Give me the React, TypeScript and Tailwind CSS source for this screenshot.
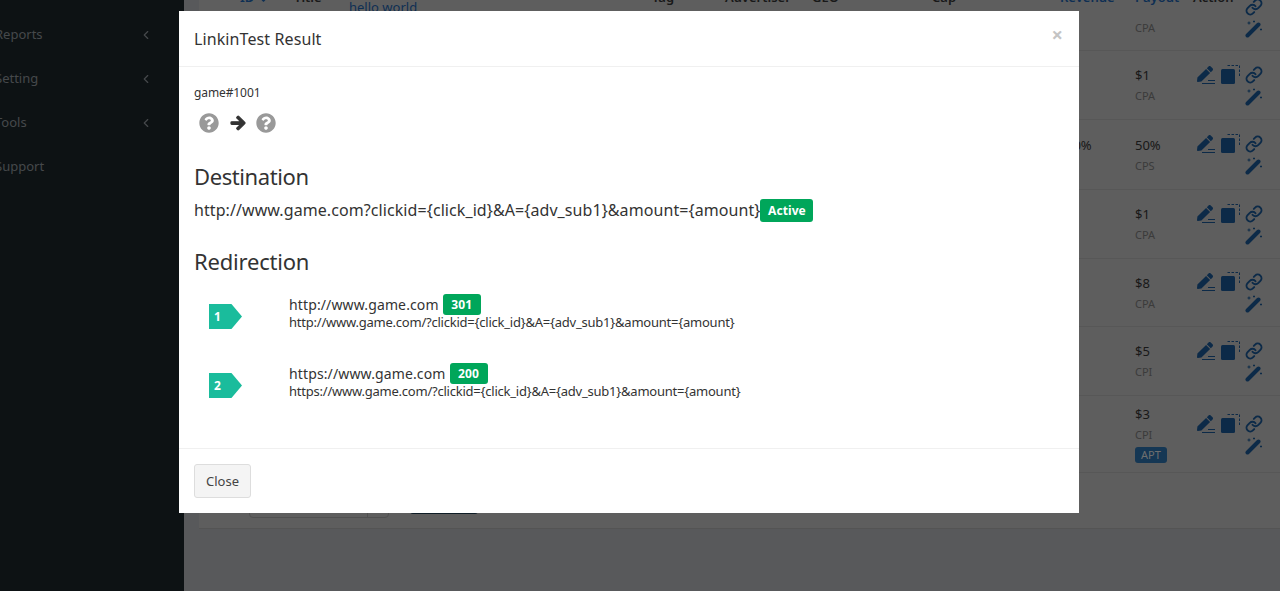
import type { ReactNode } from "react";
import { FaArrowRight, FaPen, FaQuestionCircle, FaSort } from "react-icons/fa";
import { FiChevronLeft } from "react-icons/fi";
import { Link } from "lucide-react";

const sideItems = [
  { label: "Reports", arrow: true },
  { label: "Setting", arrow: true },
  { label: "Tools", arrow: true },
  { label: "Support", arrow: false },
];

const rows = [
  { h: "h-[69px]", revenue: "$1", payout: "$1", kind: "CPA" },
  { h: "h-[70px]", revenue: "50%", payout: "50%", kind: "CPS" },
  { h: "h-[69px]", revenue: "$1", payout: "$1", kind: "CPA" },
  { h: "h-[68px]", revenue: "$1", payout: "$8", kind: "CPA" },
  { h: "h-[69px]", revenue: "$1", payout: "$5", kind: "CPI" },
  { h: "h-[77px]", revenue: "$1", payout: "$3", kind: "CPI", tag: "APT" },
];

const hops = [
  {
    url: "http://www.game.com",
    code: "301",
    full: "http://www.game.com/?clickid={click_id}&A={adv_sub1}&amount={amount}",
  },
  {
    url: "https://www.game.com",
    code: "200",
    full: "https://www.game.com/?clickid={click_id}&A={adv_sub1}&amount={amount}",
  },
];

function CopyIcon() {
  return (
    <svg width="20" height="19" viewBox="0 0 20 19" fill="none" className="-mt-[1px]">
      <path d="M6.5 .5H18.5V12.5" stroke="#185490" strokeWidth="1" strokeDasharray="2.5 1.5" />
      <rect x="0" y="4" width="14" height="15" rx="1.5" fill="#185490" />
    </svg>
  );
}

function EditIcon() {
  return (
    <span className="relative block h-[18px] w-[20px]">
      <FaPen className="absolute left-0 top-0 text-[16px] text-[#185490]" />
      <span className="absolute bottom-[3px] right-[2px] h-px w-[7px] bg-[#185490]" />
      <span className="absolute bottom-0 right-[2px] h-px w-[13px] bg-[#185490]" />
    </span>
  );
}

function WandIcon() {
  return (
    <svg width="18" height="18" viewBox="0 0 18 18" fill="none" className="mt-[3px]">
      <path d="M2.5 15.5 13.5 4.5" stroke="#185490" strokeWidth="4" strokeLinecap="round" />
      <path d="M4 1.5v3M2.5 3h3M9 .5v2M8 1.5h2M16 8.5v2M15 9.5h2" stroke="#185490" strokeWidth="1" />
    </svg>
  );
}

function Actions({ short = false }: { short?: boolean }) {
  return (
    <div className={`flex flex-wrap content-start justify-end gap-x-[4px] gap-y-[1px] ${short ? "ml-[48px] w-[20px]" : "w-[68px]"}`}>
      {!short && <EditIcon />}
      {!short && <CopyIcon />}
      <Link size={18} strokeWidth={2.6} className="text-[#185490]" />
      <WandIcon />
    </div>
  );
}

function Background() {
  return (
    <div className="flex h-[591px] w-[1280px] overflow-hidden bg-[#b1b2b6]">
      <aside className="h-full w-[184px] shrink-0 bg-[#1a2428] pt-[13px] text-[13px] text-[#8a9196]">
        {sideItems.map((item) => (
          <div key={item.label} className="-ml-[5px] flex h-[44px] w-[158px] items-center justify-between">
            <span>{item.label}</span>
            {item.arrow && <FiChevronLeft className="text-[14px]" />}
          </div>
        ))}
      </aside>
      <main className="-mt-[12px] ml-[15px] h-[541px] w-[1100px] shrink-0 border-b border-[#a8a8a8] bg-[#bcbcbc] text-[13px] text-[#333]">
        <div className="flex h-[20px] items-start font-semibold">
          <span className="ml-[41px] flex w-[54px] items-center gap-[4px] text-[#1c5fa8]">
            ID <FaSort className="text-[11px]" />
          </span>
          <span className="w-[358px]">Title</span>
          <span className="w-[73px]">Tag</span>
          <span className="w-[87px]">Advertiser</span>
          <span className="w-[120px]">GEO</span>
          <span className="w-[128px]">Cap</span>
          <span className="w-[75px] text-[#1c5fa8]">Revenue</span>
          <span className="w-[58px] text-[#1c5fa8]">Payout</span>
          <span>Action</span>
        </div>
        <div className="flex h-[43px] border-b border-[#afafaf]">
          <a className="ml-[150px] -mt-[10px] h-[20px] w-[786px] text-[#1c5fa8]">hello world</a>
          <span className="mt-[12px] w-[60px] text-[11px] text-[#777]">CPA</span>
          <div className="-mt-[10px]">
            <Actions short />
          </div>
        </div>
        {rows.map((row) => (
          <div key={row.payout + row.kind + row.h} className={`flex items-center border-b border-[#afafaf] pt-[1px] ${row.h}`}>
            <span className="ml-[867px] w-[69px] self-start pt-[15px]">{row.revenue}</span>
            <div className="w-[60px]">
              <div className="leading-[18px]">{row.payout}</div>
              <div className="mt-[4px] text-[11px] text-[#777]">{row.kind}</div>
              {row.tag && (
                <span className="mt-[4px] inline-block rounded-[3px] bg-[#2a6ea8] px-[6px] text-[11px] leading-[16px] text-[#ddd]">
                  {row.tag}
                </span>
              )}
            </div>
            <Actions />
          </div>
        ))}
        <div className="flex items-end">
          <div className="ml-[50px] mt-[11px] flex h-[34px] w-[140px] justify-end rounded-[4px] border border-[#a0a0a0]">
            <span className="w-[21px] border-l border-[#a0a0a0]" />
          </div>
          <span className="mb-[4px] ml-[21px] h-[30px] w-[68px] rounded-[3px] bg-[#1f3a4d]" />
        </div>
      </main>
    </div>
  );
}

function Badge({ children, className }: { children: ReactNode; className: string }) {
  return (
    <span className={`inline-block rounded-[3px] bg-[#00a65a] text-center text-[12px] font-bold text-white ${className}`}>
      {children}
    </span>
  );
}

export default function App() {
  return (
    <div className="relative h-[591px] w-[1280px] overflow-hidden font-['Noto_Sans','Lato',sans-serif]">
      <Background />
      <div className="absolute inset-0 bg-black/50" />
      <div className="absolute left-[179px] top-[11px] h-[502px] w-[900px] bg-white text-[#333]">
        <header className="flex h-[56px] items-center justify-between border-b border-[#f0f0f0] px-[15px]">
          <h4 className="text-[16px] leading-[26px] tracking-[0.1px]">LinkinTest Result</h4>
          <span className="mr-[1px] -mt-[8px] text-[20px] font-bold text-[#c4c4c4]">×</span>
        </header>
        <section className="h-[381px] px-[15px] pt-[17px]">
          <p className="text-[12px] leading-[18px] tracking-[-0.1px]">game#1001</p>
          <div className="mt-[11px] flex items-center pl-[5px] text-[20px]">
            <FaQuestionCircle className="text-[#999]" />
            <FaArrowRight className="ml-[11px] text-[16px] text-[#333] [stroke-width:40]" />
            <FaQuestionCircle className="ml-[10px] text-[#999]" />
          </div>
          <h3 className="mt-[30px] text-[22px] leading-[26px] tracking-[-0.4px]">Destination</h3>
          <div className="mt-[8px] flex items-center text-[16px] leading-[26px] tracking-[0.08px]">
            <span>http://www.game.com?clickid={"{click_id}"}&amp;A={"{adv_sub1}"}&amp;amount={"{amount}"}</span>
            <Badge className="h-[23px] w-[53px] leading-[23px]">Active</Badge>
          </div>
          <h3 className="mt-[25px] text-[22px] leading-[26px] tracking-[-0.2px]">Redirection</h3>
          <div className="mt-[20px] flex flex-col gap-[33px]">
            {hops.map((hop, i) => (
              <div key={hop.code} className="flex h-[36px] items-start pl-[15px]">
                <div className="mt-[10px] flex h-[25px] w-[33px] items-center bg-[#1abc9c] pl-[5px] text-[12px] font-bold text-white [clip-path:polygon(0_0,68%_0,100%_50%,68%_100%,0_100%)]">
                  {i + 1}
                </div>
                <div className="ml-[47px]">
                  <div className="flex items-center gap-[4px] text-[14px] leading-[21px] tracking-[0.13px]">
                    <span>{hop.url}</span>
                    <Badge className="h-[21px] w-[38px] leading-[21px]">{hop.code}</Badge>
                  </div>
                  <p className="text-[13px] leading-[15px] tracking-[-0.225px]">{hop.full}</p>
                </div>
              </div>
            ))}
          </div>
        </section>
        <footer className="h-[65px] border-t border-[#f0f0f0] px-[15px] pt-[15px]">
          <button className="h-[34px] w-[57px] rounded-[3px] border border-[#ddd] bg-[#f4f4f4] pt-[1px] text-[13px] text-[#444]">
            Close
          </button>
        </footer>
      </div>
    </div>
  );
}
